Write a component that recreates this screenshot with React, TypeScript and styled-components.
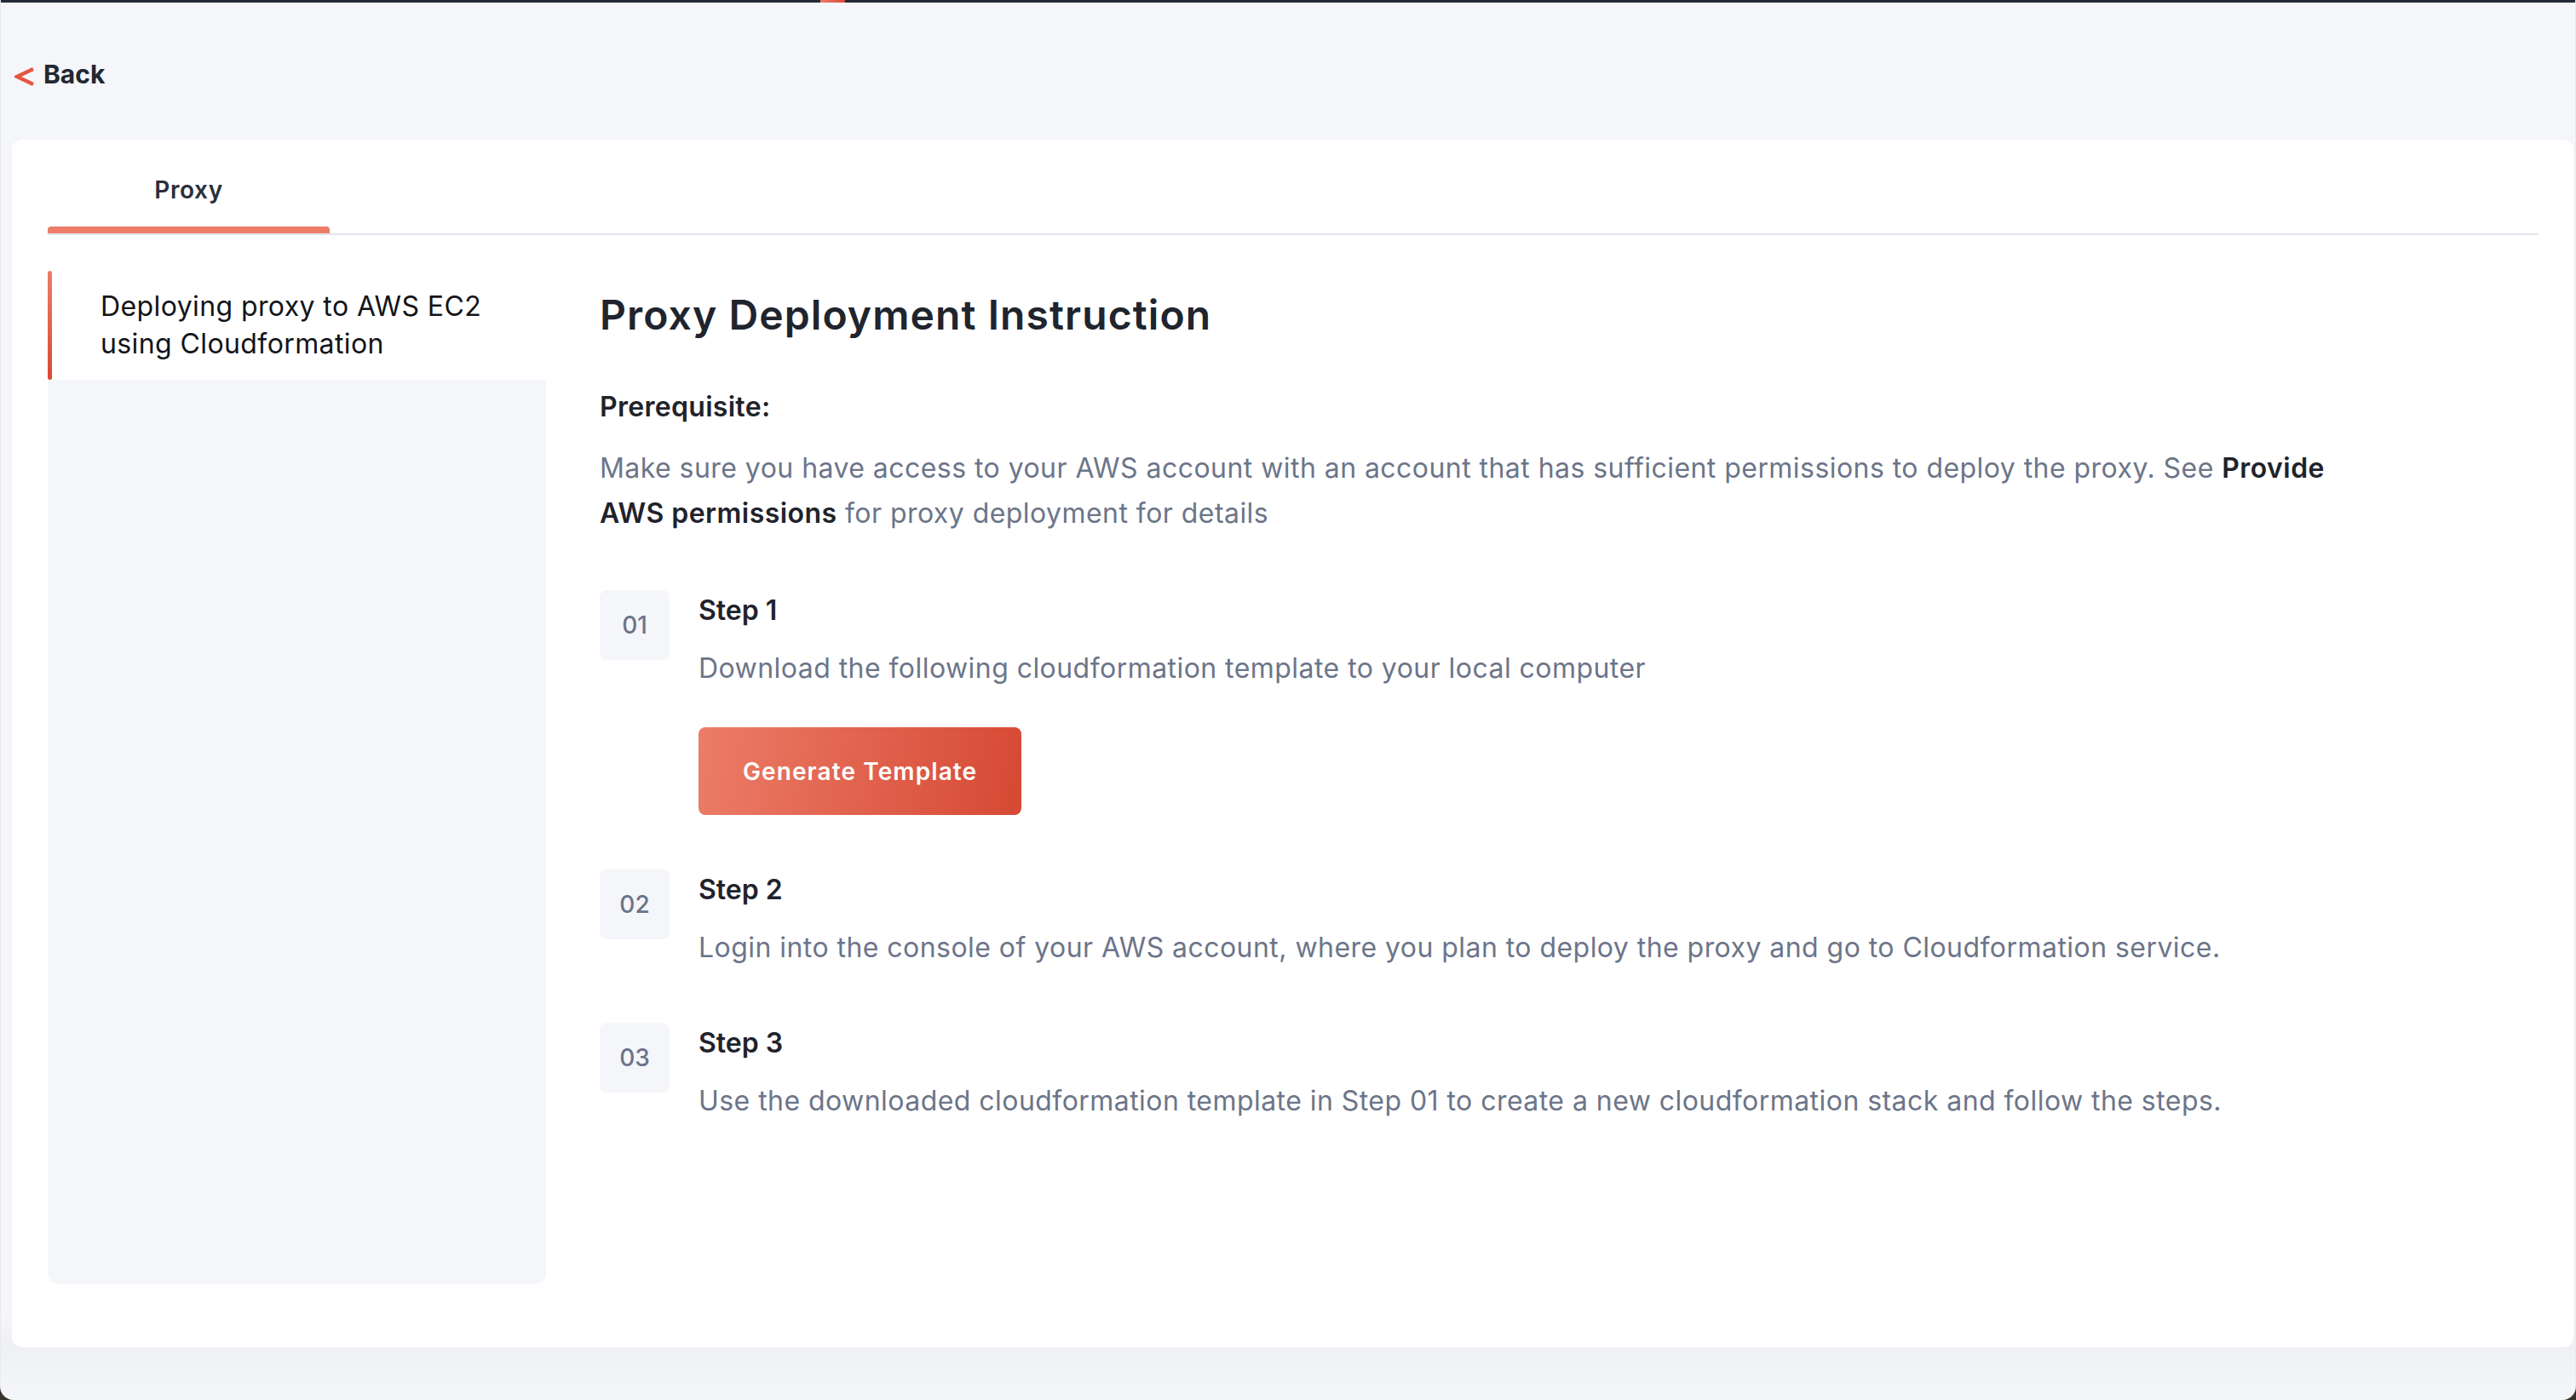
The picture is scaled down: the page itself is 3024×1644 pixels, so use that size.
import React from "react";
import styled, { createGlobalStyle } from "styled-components";

const GlobalStyle = createGlobalStyle`
  html, body {
    margin: 0;
    padding: 0;
    background: #3a322d;
  }
  body {
    font-family: Inter, "Noto Sans", "Liberation Sans", sans-serif;
    -webkit-font-smoothing: antialiased;
  }
  * { box-sizing: border-box; }
`;

const Window = styled.div`
  height: 1644px;
  display: flex;
  flex-direction: column;
  background: linear-gradient(180deg, #f5f6fa 0%, #f5f6fa 94%, #eff0f4 96%, #f5f6fa 100%);
  border-radius: 0 0 16px 16px;
  overflow: hidden;
  border-left: 1px solid #e9eaef;
  border-right: 1px solid #e9eaef;
`;

const TopBar = styled.div`
  height: 3px;
  flex-shrink: 0;
  display: flex;
  background: #232936;
`;

const TopMark = styled.div`
  margin-left: 962px;
  width: 29px;
  height: 3px;
  background: linear-gradient(90deg, #ec7d68, #d84a35);
`;

const Main = styled.div`
  flex: 1;
  display: flex;
  flex-direction: column;
  padding: 0 2px 62px 13px;
`;

const BackRow = styled.a`
  display: flex;
  align-items: center;
  gap: 10px;
  height: 40px;
  margin: 64px 0 57px 3px;
  font-size: 30px;
  font-weight: 700;
  line-height: 40px;
  color: #222831;
  text-decoration: none;
  cursor: pointer;
`;

const Chevron = styled.svg`
  width: 24px;
  height: 24px;
  margin-top: 6px;
  flex-shrink: 0;
`;

const Card = styled.div`
  flex: 1;
  display: flex;
  flex-direction: column;
  background: #ffffff;
  border-radius: 12px;
  padding: 0 41px 74px 42px;
`;

const TabBar = styled.div`
  display: flex;
  border-bottom: 2px solid #e2e5ef;
`;

const Tab = styled.div`
  width: 331px;
  display: flex;
  flex-direction: column;
  align-items: center;
  padding-top: 39px;
  font-size: 28px;
  font-weight: 600;
  line-height: 40px;
  letter-spacing: 0.6px;
  color: #2a2f3a;
`;

const TabIndicator = styled.div<{ $active?: boolean }>`
  align-self: stretch;
  margin-top: 23px;
  height: 8px;
  border-radius: 4px 4px 0 0;
  background: ${(p) => (p.$active ? "#ec7d68" : "transparent")};
`;

const Body = styled.div`
  flex: 1;
  display: flex;
  gap: 63px;
  padding-top: 42px;
`;

const Sidebar = styled.div`
  width: 585px;
  flex-shrink: 0;
  background: #f5f6fa;
  border-radius: 0 0 13px 13px;
`;

const SideItem = styled.div<{ $active?: boolean }>`
  position: relative;
  padding: 20px 24px 20px 62px;
  background: ${(p) => (p.$active ? "#ffffff" : "transparent")};
  font-size: 32px;
  line-height: 44px;
  font-weight: 400;
  letter-spacing: 0.4px;
  color: #121419;

  &::before {
    content: "";
    display: ${(p) => (p.$active ? "block" : "none")};
    position: absolute;
    left: 0;
    top: 0;
    bottom: 0;
    width: 5px;
    border-radius: 3px;
    background: linear-gradient(180deg, #ec7d68 0%, #d84a35 100%);
  }
`;

const Content = styled.div`
  flex: 1;
  display: flex;
  flex-direction: column;
`;

const Heading = styled.h1`
  margin: 22px 0 0;
  font-size: 48px;
  line-height: 60px;
  font-weight: 600;
  letter-spacing: 1.1px;
  color: #20242d;
`;

const SubHeading = styled.h2`
  margin: 54px 0 0;
  font-size: 32px;
  line-height: 48px;
  font-weight: 600;
  letter-spacing: 0.3px;
  color: #1f232b;
`;

const Paragraph = styled.p`
  margin: 21px 0 0;
  max-width: 2070px;
  font-size: 32px;
  line-height: 53px;
  font-weight: 400;
  letter-spacing: 0.45px;
  color: #6c7589;
`;

const Strong = styled.strong`
  font-weight: 600;
  color: #1f232b;
`;

const Steps = styled.div`
  margin-top: 64px;
  display: flex;
  flex-direction: column;
  gap: 64px;
`;

const StepRow = styled.div`
  display: flex;
  gap: 34px;
`;

const StepNumber = styled.div`
  width: 82px;
  height: 82px;
  flex-shrink: 0;
  display: flex;
  align-items: center;
  justify-content: center;
  border-radius: 8px;
  background: #f5f6fa;
  font-size: 28px;
  font-weight: 500;
  color: #6b7489;
`;

const StepBody = styled.div`
  display: flex;
  flex-direction: column;
  align-items: flex-start;
`;

const StepTitle = styled.div`
  font-size: 32px;
  line-height: 48px;
  font-weight: 600;
  color: #1f232b;
`;

const StepText = styled.div`
  margin-top: 20px;
  font-size: 32px;
  line-height: 48px;
  font-weight: 400;
  letter-spacing: 0.45px;
  color: #6c7589;
`;

const PrimaryButton = styled.button`
  margin-top: 45px;
  height: 103px;
  padding: 0 52px;
  border: none;
  border-radius: 8px;
  background: linear-gradient(100deg, #ec7d68 0%, #e0604b 55%, #d64933 100%);
  color: #ffffff;
  font-family: inherit;
  font-size: 28px;
  font-weight: 600;
  letter-spacing: 1.1px;
  cursor: pointer;
`;

const steps = [
  {
    n: "01",
    title: "Step 1",
    text: "Download the following cloudformation template to your local computer",
    button: "Generate Template",
  },
  {
    n: "02",
    title: "Step 2",
    text: "Login into the console of your AWS account, where you plan to deploy the proxy and go to Cloudformation service.",
  },
  {
    n: "03",
    title: "Step 3",
    text: "Use the downloaded cloudformation template in Step 01 to create a new cloudformation stack and follow the steps.",
  },
];

export default function App() {
  return (
    <>
      <GlobalStyle />
      <Window>
        <TopBar>
          <TopMark />
        </TopBar>
        <Main>
          <BackRow>
            <Chevron viewBox="0 0 24 24" fill="none">
              <path d="M22 3 L3 12 L22 21" stroke="#e4573f" strokeWidth="4.5" strokeLinejoin="miter" />
            </Chevron>
            Back
          </BackRow>
          <Card>
            <TabBar>
              <Tab>
                Proxy
                <TabIndicator $active />
              </Tab>
            </TabBar>
            <Body>
              <Sidebar>
                <SideItem $active>Deploying proxy to AWS EC2 using Cloudformation</SideItem>
              </Sidebar>
              <Content>
                <Heading>Proxy Deployment Instruction</Heading>
                <SubHeading>Prerequisite:</SubHeading>
                <Paragraph>
                  Make sure you have access to your AWS account with an account that has sufficient permissions to
                  deploy the proxy. See <Strong>Provide AWS permissions</Strong> for proxy deployment for details
                </Paragraph>
                <Steps>
                  {steps.map((s) => (
                    <StepRow key={s.n}>
                      <StepNumber>{s.n}</StepNumber>
                      <StepBody>
                        <StepTitle>{s.title}</StepTitle>
                        <StepText>{s.text}</StepText>
                        {s.button && <PrimaryButton>{s.button}</PrimaryButton>}
                      </StepBody>
                    </StepRow>
                  ))}
                </Steps>
              </Content>
            </Body>
          </Card>
        </Main>
      </Window>
    </>
  );
}
